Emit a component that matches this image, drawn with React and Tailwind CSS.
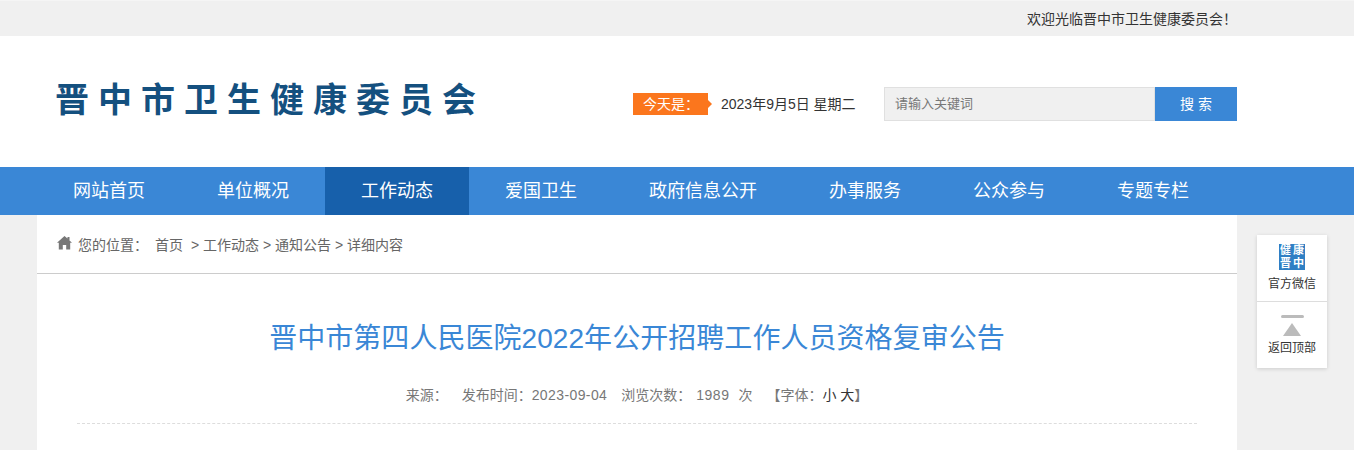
import React from "react";

const nav = [
  ["网站首页", false],
  ["单位概况", false],
  ["工作动态", true],
  ["爱国卫生", false],
  ["政府信息公开", false],
  ["办事服务", false],
  ["公众参与", false],
  ["专题专栏", false],
];

export default function App() {
  return (
    <div className="relative h-[450px] overflow-hidden bg-[#f0f0f0] font-['Liberation_Sans','Noto_Sans_CJK_SC',sans-serif]">
      <div className="h-9 border-t border-[#f5f5f5] bg-[#f0f0f0]">
        <div className="ml-[37px] flex h-[35px] w-[1200px] items-center justify-end text-sm text-[#333]">
          欢迎光临晋中市卫生健康委员会！
        </div>
      </div>

      <div className="h-[131px] bg-white">
        <div className="ml-[37px] flex h-full w-[1200px] items-start">
          <div className="mt-[42px] ml-[18px] w-[578px] text-[34px] leading-[44px] font-bold tracking-[9px] whitespace-nowrap text-[#14507f]">
            晋中市卫生健康委员会
          </div>
          <div className="mt-[57px] flex h-[22px] w-[80px] items-center">
            <div className="flex h-[22px] w-[75px] items-center bg-[#fb761d] pl-[10px] text-sm text-white">今天是：</div>
            <div className="h-0 w-0 border-y-[4px] border-l-[4px] border-y-transparent border-l-[#fb761d]" />
          </div>
          <div className="mt-[57px] ml-[8px] w-[163px] text-sm leading-[22px] whitespace-nowrap text-[#333]">
            2023年9月5日 星期二
          </div>
          <div className="mt-[51px] flex h-[34px]">
            <div className="flex w-[271px] items-center border border-[#e0e0e0] bg-[#f0f0f0] pl-[10px] text-[13px] text-[#777]">
              请输入关键词
            </div>
            <div className="flex w-[82px] items-center justify-center bg-[#3a87d6] text-sm text-white">
              搜 索
            </div>
          </div>
        </div>
      </div>

      <div className="h-12 bg-[#3a87d6]">
        <div className="ml-[37px] flex h-full w-[1200px]">
          {nav.map(([t, a]) => (
            <div
              key={t}
              className={`flex h-full items-center px-9 text-lg whitespace-nowrap text-white ${a ? "bg-[#1760ab]" : ""}`}
            >
              {t}
            </div>
          ))}
        </div>
      </div>

      <div className="ml-[37px] h-[235px] w-[1200px] bg-white">
        <div className="flex h-[59px] items-center border-b border-[#ccc] pt-[2px] pl-5 text-sm whitespace-nowrap text-[#666]">
          <svg width="15" height="14" viewBox="0 0 15 14" className="mr-[6px] mb-[4px]">
            <path fill="#777" d="M7.5 0 L10.5 2.6 L10.5 1 L12.5 1 L12.5 4.4 L15 6.8 L13.2 6.8 L13.2 13.5 L9.2 13.5 L9.2 9 L5.8 9 L5.8 13.5 L1.8 13.5 L1.8 6.8 L0 6.8 Z" />
          </svg>
          <span>您的位置：</span>
          <span className="ml-[7px]">首页</span>
          <span className="ml-[8px]">&gt; 工作动态 &gt; 通知公告 &gt; 详细内容</span>
        </div>
        <div className="mt-[47px] text-center text-[28px] leading-[36px] tracking-[0.05px] text-[#3a87d6]">
          晋中市第四人民医院2022年公开招聘工作人员资格复审公告
        </div>
        <div className="mx-10 mt-[28px] flex h-[39px] justify-center border-b border-dashed border-[#ddd] pb-[10px] text-sm leading-5 whitespace-nowrap text-[#777]">
          <span>来源：</span>
          <span className="ml-[14px]">发布时间：<span className="tracking-[0.4px]">2023-09-04</span></span>
          <span className="ml-[14px]">浏览次数：</span>
          <span className="ml-[5px] tracking-[0.5px]">1989</span>
          <span className="ml-[9px]">次</span>
          <span className="ml-[14px]">【字体：<span className="text-[#333]">小 大</span>】</span>
        </div>
      </div>

      <div className="absolute top-[235px] left-[1257px] h-[133px] w-[70px] bg-white shadow-[0_1px_4px_rgba(0,0,0,0.15)]">
        <div className="flex h-[67px] flex-col items-center border-b border-[#ddd] pt-[9px]">
          <div className="grid h-[26px] w-[26px] grid-cols-2 bg-[#2f7fc4] text-center text-[11px] leading-[13px] font-bold text-white">
            <span>健</span><span>康</span><span>晋</span><span>中</span>
          </div>
          <div className="mt-[4px] text-xs leading-5 text-[#333]">官方微信</div>
        </div>
        <div className="flex flex-col items-center pt-[13px]">
          <div className="h-[3px] w-[23px] rounded-full bg-[#bbb]" />
          <div className="mt-[5px] h-0 w-0 border-x-[9px] border-b-[13px] border-x-transparent border-b-[#bbb]" />
          <div className="mt-[2px] text-xs leading-5 text-[#333]">返回顶部</div>
        </div>
      </div>
    </div>
  );
}
